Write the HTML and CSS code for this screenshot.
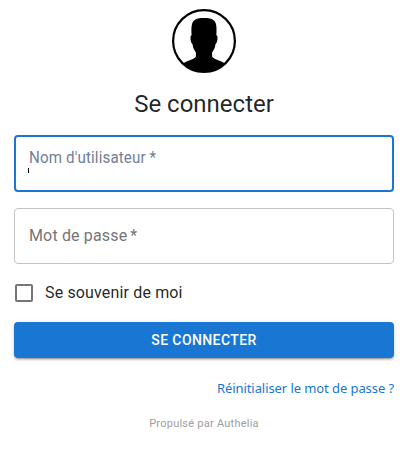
FILE: index.html
```html
<!DOCTYPE html>
<html lang="fr">
<head>
<meta charset="utf-8">
<title>Se connecter</title>
<link rel="stylesheet" href="styles.css">
</head>
<body>
<main class="login">
  <svg class="avatar" viewBox="0 0 64 64" aria-hidden="true">
    <circle cx="32" cy="32" r="30.9" fill="#fff" stroke="#000" stroke-width="2.2"/>
    <path d="M11 54.500C15 51.500 22.500 50.500 23.900 47.500V43.500C22 41 21 38.500 20.600 35.500C19 34 18.300 31 18.500 28C18.600 27 19 26.500 19.600 26.200C19.300 20 19.200 15 21.500 12C23.500 9.500 28 9 32 9C36 9 40.500 9.500 42.500 12C44.800 15 44.700 20 44.400 26.200C45 26.500 45.400 27 45.500 28C45.700 31 45 34 43.400 35.500C43 38.500 42 41 40.100 43.500V47.500C41.500 50.500 49 51.500 53 54.500A31 31 0 0 1 32 63A31 31 0 0 1 11 54.500Z"/>
  </svg>
  <h1 class="title">Se connecter</h1>
  <form class="form">
    <div class="field field-active">
      <label class="label">Nom d'utilisateur<span class="star">*</span></label>
      <span class="caret"></span>
    </div>
    <div class="field">
      <label class="label">Mot de passe<span class="star">*</span></label>
    </div>
    <label class="remember">
      <span class="checkbox"></span>
      <span class="remember-text">Se souvenir de moi</span>
    </label>
    <button class="submit" type="button">SE CONNECTER</button>
    <a class="reset">Réinitialiser le mot de passe ?</a>
  </form>
  <footer class="powered">Propulsé par Authelia</footer>
</main>
</body>
</html>
```
FILE: styles.css
```css
* {
  box-sizing: border-box;
}

body {
  margin: 0;
  background: #fff;
  color: rgba(0, 0, 0, 0.87);
  font-family: Roboto, "Liberation Sans", sans-serif;
  font-size: 16px;
}

.login {
  display: flex;
  flex-direction: column;
  align-items: center;
  width: 380px;
  margin-left: 14px;
  padding-top: 9px;
}

.avatar {
  display: block;
  width: 64px;
  height: 64px;
}

.title {
  margin: 15px 0 0;
  font-size: 24px;
  font-weight: 400;
  line-height: 32px;
}

.form {
  display: flex;
  flex-direction: column;
  width: 100%;
  margin-top: 15px;
}

.field {
  position: relative;
  height: 56px;
  margin-top: 16px;
  padding: 15px 14px;
  border: 1px solid #c4c4c4;
  border-radius: 4px;
}

.field-active {
  height: 57px;
  margin-top: 0;
  padding: 10px 13px;
  border: 2px solid #1976d2;
}

.label {
  display: block;
  color: #757575;
  line-height: 23px;
  letter-spacing: 0.15px;
}

.field-active .label {
  color: #718096;
  line-height: 21px;
  transform: scaleX(0.945);
  transform-origin: left center;
}

.star {
  margin-left: 3px;
}

.field-active .star {
  margin-left: 4px;
}

.caret {
  position: absolute;
  top: 31px;
  left: 12px;
  width: 1px;
  height: 5px;
  background: #000;
}

.remember {
  display: flex;
  align-items: center;
  gap: 12px;
  height: 24px;
  margin-top: 17px;
  padding-left: 1px;
}

.checkbox {
  width: 18px;
  height: 18px;
  border: 2px solid #757575;
  border-radius: 2px;
}

.remember-text {
  padding-bottom: 2px;
  letter-spacing: 0.15px;
}

.submit {
  height: 36px;
  margin-top: 17px;
  border: 0;
  border-radius: 4px;
  background: #1976d2;
  box-shadow: 0 3px 1px -2px rgba(0, 0, 0, 0.2), 0 2px 2px 0 rgba(0, 0, 0, 0.14), 0 1px 5px 0 rgba(0, 0, 0, 0.12);
  color: #fff;
  font-family: inherit;
  font-size: 14px;
  font-weight: 500;
  letter-spacing: 0.4px;
}

.reset {
  align-self: flex-end;
  margin-top: 20px;
  color: #1976d2;
  font-family: "Noto Sans", sans-serif;
  font-size: 13px;
  line-height: 20px;
  letter-spacing: -0.08px;
  white-space: nowrap;
}

.powered {
  margin-top: 18px;
  color: #9e9e9e;
  font-size: 11px;
  line-height: 16px;
  letter-spacing: 0.24px;
}
```
